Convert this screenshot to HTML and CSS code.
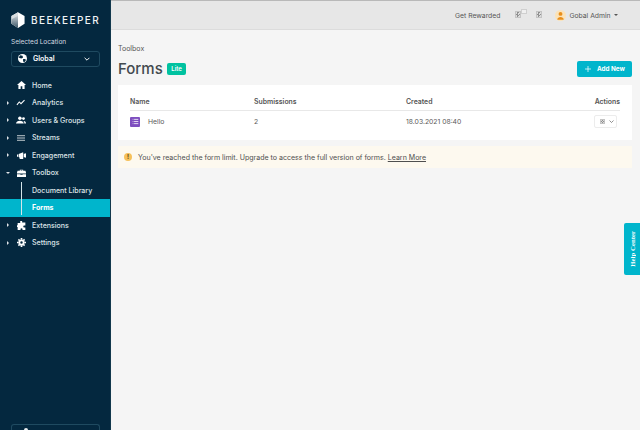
FILE: index.html
```html
<!DOCTYPE html>
<html lang="en">
<head>
<meta charset="utf-8">
<title>Forms</title>
<link rel="stylesheet" href="styles.css">
</head>
<body>
<div class="app">
  <aside class="sidebar">
    <div class="brand">
      <svg class="logo" viewBox="0 0 16 18" width="14" height="16"><defs><linearGradient id="lg" x1="0" y1="0" x2="0" y2="1"><stop offset="0" stop-color="#c9d0d5"/><stop offset="1" stop-color="#3d5869"/></linearGradient></defs><path d="M8 0l7.500 4.400v9L8 18 .5 13.400v-9z" fill="#fff"/><path d="M.5 4.400L8 0v8.500L.5 13z" fill="#d8dde0"/><path d="M.5 8L8 4v14L.5 13.400z" fill="url(#lg)"/></svg>
      <span class="brand-name">BEEKEEPER</span>
    </div>
    <div class="loc-label">Selected Location</div>
    <div class="loc-select">
      <svg class="loc-globe" viewBox="0 0 16 16" width="9" height="9"><circle cx="8" cy="8" r="8" fill="#fff"/><path d="M4 2l4 1 1 3-3 2-3-1-2-1zM9 9l4 0 1 2-3 4-2-2z" fill="#05293f"/></svg>
      <span class="loc-name">Global</span>
      <svg class="loc-chev" viewBox="0 0 10 6" width="6" height="4"><path d="M1 1l4 4 4-4" fill="none" stroke="#fff" stroke-width="1.600"/></svg>
    </div>
    <nav class="nav">
      <a class="nav-item"><span class="caret none"></span><span class="ico"><svg viewBox="0 0 16 14" width="9" height="8"><path d="M8 0L0 7h2.500v7h4V9h3v5h4V7H16z" fill="#fff"/></svg></span>Home</a>
      <a class="nav-item"><span class="caret"></span><span class="ico"><svg viewBox="0 0 16 12" width="10" height="7"><path d="M1 10l4-5 3 3 6-6" fill="none" stroke="#fff" stroke-width="1.800"/></svg></span>Analytics</a>
      <a class="nav-item"><span class="caret"></span><span class="ico"><svg viewBox="0 0 18 13" width="10" height="8"><circle cx="7" cy="3.500" r="3.200" fill="#fff"/><circle cx="13.500" cy="4" r="2.500" fill="#fff"/><path d="M0 13c0-7 14-7 14 0zM15 13c0-2-.5-3.500-1.500-4.500 2.500-.5 4.500 1.500 4.500 4.500z" fill="#fff"/></svg></span>Users &amp; Groups</a>
      <a class="nav-item"><span class="caret"></span><span class="ico"><svg viewBox="0 0 14 10" width="8" height="6"><path d="M0 1h14M0 5h14M0 9h14" stroke="#dfe4e7" stroke-width="1.500"/></svg></span>Streams</a>
      <a class="nav-item"><span class="caret"></span><span class="ico"><svg viewBox="0 0 16 12" width="9" height="7"><path d="M0 4h2v4H0zM3 3.500L11 0v12L3 8.500zM12 3h1l3-1v8l-3-1h-1zM4 9h3l1 3H5z" fill="#fff"/></svg></span>Engagement</a>
      <a class="nav-item"><span class="caret down"></span><span class="ico"><svg viewBox="0 0 16 14" width="9" height="8"><path d="M5 3V1h6v2h4l1 3v2H0V6l1-3zM6.500 3h3V2.300h-3zM0 9h6v1h4V9h6v5H0z" fill="#fff"/></svg></span>Toolbox</a>
      <div class="subnav">
        <a class="sub-item">Document Library</a>
        <a class="sub-item active">Forms</a>
      </div>
      <a class="nav-item"><span class="caret"></span><span class="ico"><svg viewBox="0 0 14 14" width="9" height="9"><path d="M5 0h3v2.500h5V7h-2.500a2 2 0 0 0 0 3H13v4H8.500v-2a2 2 0 0 0-3 0v2H1V9.500H0v-3h1V3h4z" fill="#fff"/></svg></span>Extensions</a>
      <a class="nav-item"><span class="caret"></span><span class="ico"><svg viewBox="0 0 16 16" width="9" height="9"><path d="M8 2.500a5.500 5.500 0 1 0 0 11 5.500 5.500 0 0 0 0-11zm0 3.300a2.200 2.200 0 1 1 0 4.400 2.200 2.200 0 0 1 0-4.400z" fill="#fff"/><path d="M6.500 0h3v3h-3zM6.500 13h3v3h-3zM0 6.500h3v3H0zM13 6.500h3v3h-3zM1.500 3.500l2-2 2 2-2 2zM10.500 3.500l2-2 2 2-2 2zM1.500 12.500l2-2 2 2-2 2zM10.500 12.500l2-2 2 2-2 2z" fill="#fff"/></svg></span>Settings</a>
    </nav>
    <div class="side-foot"><span class="foot-dot"></span></div>
  </aside>
  <div class="content">
    <header class="topbar">
      <span class="top-link">Get Rewarded</span>
      <span class="broken one"><i class="badge-box"></i></span>
      <span class="broken two"></span>
      <span class="avatar"><svg viewBox="0 0 12 12" width="11" height="11"><circle cx="6" cy="6" r="6" fill="#fbe3b9"/><circle cx="6" cy="4.300" r="2.100" fill="#e98f1c"/><path d="M2.500 10.500c0-4 7-4 7 0z" fill="#e98f1c"/></svg></span>
      <span class="user">Gobal Admin</span>
      <span class="user-caret"></span>
    </header>
    <main class="main">
      <div class="crumb">Toolbox</div>
      <div class="title-row">
        <h1 class="title">Forms</h1>
        <span class="lite">Lite</span>
        <button class="add"><svg viewBox="0 0 10 10" width="6" height="6"><path d="M5 0v10M0 5h10" stroke="#fff" stroke-width="1.200"/></svg><span>Add New</span></button>
      </div>
      <section class="card">
        <div class="row head">
          <span class="c-name">Name</span>
          <span class="c-sub">Submissions</span>
          <span class="c-created">Created</span>
          <span class="c-act">Actions</span>
        </div>
        <div class="row body">
          <span class="c-name hello"><span class="form-ico"><svg viewBox="0 0 10 10" width="7" height="7"><path d="M1 2h1M1 5h1M1 8h1M3 2h6M3 5h6M3 8h6" stroke="#fff" stroke-width="1.100"/></svg></span>Hello</span>
          <span class="c-sub">2</span>
          <span class="c-created">18.03.2021 08:40</span>
          <span class="c-act"><span class="act-btn"><i class="broken small"></i><svg viewBox="0 0 10 6" width="5" height="3"><path d="M1 1l4 4 4-4" fill="none" stroke="#555" stroke-width="1.300"/></svg></span></span>
        </div>
      </section>
      <div class="notice">
        <span class="warn">!</span>
        <span>You've reached the form limit. Upgrade to access the full version of forms. <a class="learn">Learn More</a></span>
      </div>
    </main>
  </div>
</div>
<div class="help"><span>Help Center</span></div>
</body>
</html>
```
FILE: styles.css
```css
* { box-sizing: border-box; }
html, body { margin: 0; height: 100%; overflow: hidden; }
body { font-family: "Inter", "Liberation Sans", sans-serif; font-size: 7px; color: #4a4a4a; }
.app { display: flex; height: 430px; width: 640px; }

.sidebar { width: 111px; flex: none; background: #04283f; color: #e8ecef; display: flex; flex-direction: column; border-right: 1px solid #12384d; }
.brand { display: flex; align-items: center; gap: 6px; padding: 10px 0 0 11px; height: 30px; }
.brand-name { font-size: 10px; letter-spacing: 1.400px; color: #f0f3f5; font-weight: 500; }
.loc-label { margin: 8px 0 0 11px; font-size: 6.500px; color: #d5dce0; line-height: 8px; }
.loc-select { margin: 4.500px 0 0 11px; width: 89px; height: 16px; border: 1px solid #1f4a60; border-radius: 3px; display: flex; align-items: center; padding: 0 9px 0 6px; }
.loc-name { margin-left: 6px; font-size: 7px; font-weight: 600; color: #fff; flex: 1; }
.nav { margin-top: 10px; display: flex; flex-direction: column; }
.nav-item { height: 17.500px; display: flex; align-items: center; font-size: 7.050px; color: #dfe4e8; font-weight: 500; }
.caret { width: 12px; flex: none; display: flex; padding-left: 7px; }
.caret::before { content: ""; width: 0; height: 0; border-style: solid; border-width: 2px 0 2px 2px; border-color: transparent transparent transparent #dfe4e8; }
.caret.none::before { display: none; }
.caret.down { padding-left: 6px; }
.caret.down::before { border-width: 2px 2px 0 2px; border-color: #dfe4e8 transparent transparent transparent; }
.ico { width: 18px; flex: none; display: flex; justify-content: center; margin-right: 2px; }
.subnav { position: relative; }
.subnav::before { content: ""; position: absolute; left: 21px; top: 0; bottom: 2px; width: 1px; background: #d5e5ea; z-index: 1; }
.sub-item { display: flex; align-items: center; height: 17.500px; padding-left: 32px; font-size: 7.050px; font-weight: 500; color: #dfe4e8; }
.sub-item.active { background: #00b5cc; color: #fff; font-weight: 700; }
.side-foot { margin: auto 0 0 11px; width: 89px; height: 6px; border: 1px solid #1f4a60; border-bottom: 0; border-radius: 3px 3px 0 0; position: relative; }
.foot-dot { position: absolute; left: 12px; top: 3px; width: 4px; height: 4px; border-radius: 50%; background: #e8ecef; }

.content { flex: 1; min-width: 0; display: flex; flex-direction: column; background: #f5f5f5; }
.topbar { height: 30px; flex: none; background: #e7e7e7; border-top: 1px solid #b9b9b9; border-bottom: 1px solid #dcdcdc; display: flex; align-items: center; padding-left: 344px; font-size: 6.800px; color: #555; }
.top-link { margin-right: 15px; }
.broken { display: block; width: 6px; height: 7px; margin-top: -2px; background: repeating-conic-gradient(#8f8f8f 0 25%, #dcdcdc 0 50%) 0 0 / 3px 3px; border: 1px solid #c4c4c4; }
.broken.one { position: relative; }
.badge-box { position: absolute; left: 5px; top: -3px; width: 6px; height: 5px; background: #f0f0f0; border: 1px solid #cfcfcf; }
.broken.two { margin-left: 15px; }
.avatar { margin-left: 13px; width: 11px; height: 11px; display: flex; }
.user { margin-left: 3px; }
.user-caret { margin-left: 3px; border-style: solid; border-width: 2px 2px 0 2px; border-color: #555 transparent transparent transparent; }

.main { padding: 15px 8px 0 7px; }
.crumb { font-size: 7px; line-height: 8px; color: #555; }
.title-row { display: flex; align-items: center; margin-top: 6px; height: 20px; }
.title { margin: 0; font-size: 15px; font-weight: 500; color: #434a4f; line-height: 20px; }
.lite { margin-left: 4px; background: #00c2a0; color: #fff; font-size: 6px; font-weight: 600; border-radius: 2px; padding: 0 4.500px; height: 12px; line-height: 12px; }
.add { margin-left: auto; margin-top: -1px; height: 16px; width: 55px; border: 0; border-radius: 2px; background: #00b5cc; color: #fff; font: 700 6.300px "Inter", "Liberation Sans", sans-serif; display: flex; align-items: center; gap: 6px; padding: 0 0 0 8px; }

.card { margin-top: 6px; background: #fff; height: 55px; padding: 0 12px 0 12px; width: 514px; }
.row { display: grid; grid-template-columns: 124px 152px 1fr 60px; align-items: center; }
.head { height: 25.500px; padding-top: 9px; border-bottom: 1px solid #e8e8e8; font-weight: 600; font-size: 6.900px; color: #555; }
.body { height: 22px; font-size: 6.800px; color: #5a5a5a; }
.c-act { text-align: right; }
.hello { display: flex; align-items: center; gap: 8px; }
.form-ico { width: 10px; height: 10px; background: #7e4fbf; border-radius: 1px; display: flex; align-items: center; justify-content: center; }
.act-btn { display: inline-flex; align-items: center; gap: 4px; width: 23px; height: 13px; border: 1px solid #ececec; border-radius: 2px; padding-left: 5px; margin: 0 3px 0 0; vertical-align: middle; }
.broken.small { width: 5px; height: 5px; margin-top: 0; background-size: 2px 2px; }

.notice { margin-top: 6px; width: 514px; height: 22px; background: #fdf9ef; display: flex; align-items: center; padding-left: 6px; gap: 6px; font-size: 7.060px; color: #4f4f4f; }
.warn { width: 8px; height: 8px; border-radius: 50%; background: #f6c15b; color: #5d4210; font-size: 6px; font-weight: 700; text-align: center; line-height: 8px; }
.learn { text-decoration: underline; }

.help { position: fixed; right: 0; top: 223px; width: 16px; height: 52px; background: #00b5cc; border-radius: 2px 0 0 2px; display: flex; align-items: center; justify-content: center; }
.help span { writing-mode: vertical-rl; transform: rotate(180deg); font-family: "Liberation Serif", serif; font-weight: 700; font-size: 6.800px; color: #fff; white-space: nowrap; }
```
